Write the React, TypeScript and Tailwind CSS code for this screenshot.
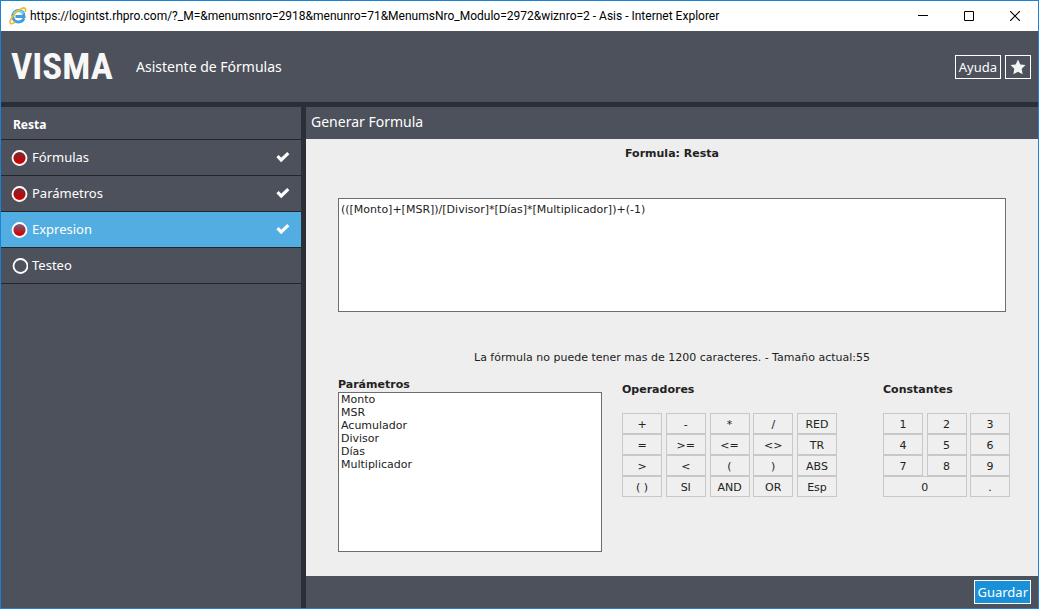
import { useState } from "react";
import clsx from "clsx";

const steps = [
  { name: "Fórmulas", done: true },
  { name: "Parámetros", done: true },
  { name: "Expresion", done: true },
  { name: "Testeo", done: false },
];

const params = ["Monto", "MSR", "Acumulador", "Divisor", "Días", "Multiplicador"];

const operators = [
  "+", "-", "*", "/", "RED",
  "=", ">=", "<=", "<>", "TR",
  ">", "<", "(", ")", "ABS",
  "( )", "SI", "AND", "OR", "Esp",
];

const constants = ["1", "2", "3", "4", "5", "6", "7", "8", "9", "0", "."];

const BrowserIcon = () => (
  <svg width="18" height="18" viewBox="0 0 18 18" fill="none" aria-hidden="true">
    <path d="M15 11.300c-.9 2.300-3 3.700-5.500 3.700-3.300 0-5.700-2.400-5.700-5.700s2.400-5.800 5.700-5.800 5.700 2.300 5.600 6H6.500" stroke="#3f9fdc" strokeWidth="2.900" />
    <path d="M4.500 7c1-2.200 2.800-3.300 5-3.300s4 1 5 3" stroke="#86d6f7" strokeWidth="1.200" />
    <path d="M3 10.500C.2 14.800.3 17.500 3.500 16.500c1-.3 2-.9 2.900-1.600M3 10.500C5.200 6.700 9.200 2.900 12.800 1.400c3.200-1.300 4.600.2 3.300 3.500" stroke="#f0bb22" strokeWidth="1.600" />
  </svg>
);

const CheckIcon = () => (
  <svg width="14" height="12" viewBox="0 0 14 12" fill="none" aria-hidden="true">
    <path d="M1.500 4.200 5.200 7.900 12.300 1.200" stroke="#fff" strokeWidth="3.200" />
  </svg>
);

const StepDot = ({ done }: { done: boolean }) => (
  <svg width="17" height="16" viewBox="0 0 17 16" aria-hidden="true">
    <defs>
      <linearGradient id="dot" x1="0" y1="0" x2="0" y2="1">
        <stop offset="0" stopColor="#a80000" stopOpacity="0.400" />
        <stop offset="0.850" stopColor="#d40000" />
      </linearGradient>
    </defs>
    <circle cx={done ? 8.5 : 9.5} cy="8" r="7" fill={done ? "url(#dot)" : "none"} stroke="#fff" strokeWidth="1.800" />
  </svg>
);

const KeyButton = ({ text, onPress }: { text: string; onPress: (t: string) => void }) => (
  <button
    type="button"
    onClick={() => onPress(text)}
    className={clsx(
      "h-[21px] border border-[#c8c8c8] bg-[#efefef] pt-0.5 text-center leading-[17px] hover:bg-white",
      text === "0" && "col-span-2"
    )}
  >
    {text}
  </button>
);

const App = () => {
  const [active, setActive] = useState("Expresion");
  const [formula, setFormula] = useState("(([Monto]+[MSR])/[Divisor]*[Días]*[Multiplicador])+(-1)");

  const append = (text: string) => setFormula(formula + text);

  return (
    <div className="flex min-h-screen flex-col border border-[#1883d7] bg-[#4d515b] font-['Noto_Sans',sans-serif] text-white">
      <div className="flex h-[30px] items-center bg-white pl-2 text-black">
        <BrowserIcon />
        <p className="ml-[3px] flex-1 truncate font-['Roboto',sans-serif] text-xs">
          https://logintst.rhpro.com/?_M=&amp;menumsnro=2918&amp;menunro=71&amp;MenumsNro_Modulo=2972&amp;wiznro=2 - Asis - Internet Explorer
        </p>
        <div className="flex">
          <button type="button" aria-label="Minimizar" className="flex w-[46px] justify-center">
            <svg width="10" height="10" viewBox="0 0 10 10" stroke="#000"><path d="M0 4.500h10" /></svg>
          </button>
          <button type="button" aria-label="Maximizar" className="flex w-[46px] justify-center">
            <svg width="10" height="10" viewBox="0 0 10 10" fill="none" stroke="#000"><path d="M.5.5h9v9h-9z" /></svg>
          </button>
          <button type="button" aria-label="Cerrar" className="flex w-[46px] justify-center">
            <svg width="10" height="10" viewBox="0 0 10 10" stroke="#000" strokeWidth="1.200"><path d="m0 0 10 10m0-10L0 10" /></svg>
          </button>
        </div>
      </div>

      <header className="flex h-[76px] items-center border-b-[5px] border-[#2b2f36] pr-[7px] pl-2.5">
        <span className="w-[125px] font-['Roboto_Condensed','Liberation_Sans',sans-serif] text-[37px] leading-none font-bold text-[#f7f7f7]">
          VISMA
        </span>
        <h1 className="flex-1 text-sm">Asistente de Fórmulas</h1>
        <div className="flex gap-1">
          <button type="button" className="h-6 border border-white px-[3px] text-[13px] leading-5">
            Ayuda
          </button>
          <button type="button" aria-label="Favoritos" className="flex h-6 w-[26px] items-center justify-center border border-white">
            <svg width="16" height="16" viewBox="0 0 16 16" fill="#f4f4f4" aria-hidden="true">
              <path d="m8 .5 2.300 4.900 5.200.7-3.800 3.700.9 5.400L8 12.700l-4.600 2.500.9-5.400L.5 6.100l5.200-.7z" />
            </svg>
          </button>
        </div>
      </header>

      <div className="flex flex-1">
        <nav className="w-[305px] shrink-0 border-r-[5px] border-[#2b2f36] text-[13px]">
          <h2 className="flex h-[33px] items-center border-b border-[#22262b] px-3 pt-1 text-xs font-bold">Resta</h2>
          <ul>
            {steps.map((step) => (
              <li key={step.name}>
                <button
                  type="button"
                  onClick={() => setActive(step.name)}
                  className={clsx(
                    "flex h-9 w-full items-center border-b border-[#22262b] pr-[11px] pl-2.5 text-left",
                    active === step.name && "bg-[#51ade2]"
                  )}
                >
                  <StepDot done={step.done} />
                  <span className="ml-1 flex-1">{step.name}</span>
                  {step.done && <CheckIcon />}
                </button>
              </li>
            ))}
          </ul>
        </nav>

        <div className="flex min-w-0 flex-1 flex-col">
          <h2 className="flex h-8 items-center px-[5px] pb-0.5 text-sm">Generar Formula</h2>
          <main className="flex-1 bg-[#eee] font-['DejaVu_Sans',Verdana,sans-serif] text-[11px] leading-4 text-[#222]">
            <h3 className="pt-[7px] text-center font-bold">Formula: Resta</h3>
            <div className="px-8 pt-9">
              <textarea
                aria-label="Formula"
                value={formula}
                onChange={(e) => setFormula(e.target.value)}
                className="block h-[114px] w-full resize-none border border-[#6d6d6d] bg-white px-0.5 py-[3px]"
              />
            </div>
            <p className="mt-[38px] text-center">
              La fórmula no puede tener mas de 1200 caracteres. - Tamaño actual:{formula.length}
            </p>
            <div className="flex pt-[11px] pr-7 pb-6 pl-8">
              <div className="min-w-0 flex-1">
                <label htmlFor="params" className="block leading-[15px] font-bold">Parámetros</label>
                <select
                  id="params"
                  size={12}
                  className="block h-40 w-full border border-[#6d6d6d] bg-white"
                  onDoubleClick={(e) => append(`[${e.currentTarget.value}]`)}
                >
                  {params.map((p) => (
                    <option key={p} className="h-[13px] min-h-0 px-0.5 py-0 leading-[13px]">{p}</option>
                  ))}
                </select>
              </div>
              <div className="ml-5 w-[215px] pt-[5px]">
                <h4 className="mb-[15px] font-bold">Operadores</h4>
                <div className="grid grid-cols-[repeat(5,40px)] justify-between">
                  {operators.map((o) => (
                    <KeyButton key={o} text={o} onPress={append} />
                  ))}
                </div>
              </div>
              <div className="ml-[46px] w-[127px] pt-[5px]">
                <h4 className="mb-[15px] font-bold">Constantes</h4>
                <div className="grid grid-cols-[repeat(3,40px)] justify-between">
                  {constants.map((c) => (
                    <KeyButton key={c} text={c} onPress={append} />
                  ))}
                </div>
              </div>
            </div>
          </main>
          <footer className="flex h-8 items-center justify-end pr-[7px]">
            <button type="button" className="h-6 border border-white bg-[#1991d8] px-0.5 text-[13px] leading-5">
              Guardar
            </button>
          </footer>
        </div>
      </div>
    </div>
  );
};

export default App;
